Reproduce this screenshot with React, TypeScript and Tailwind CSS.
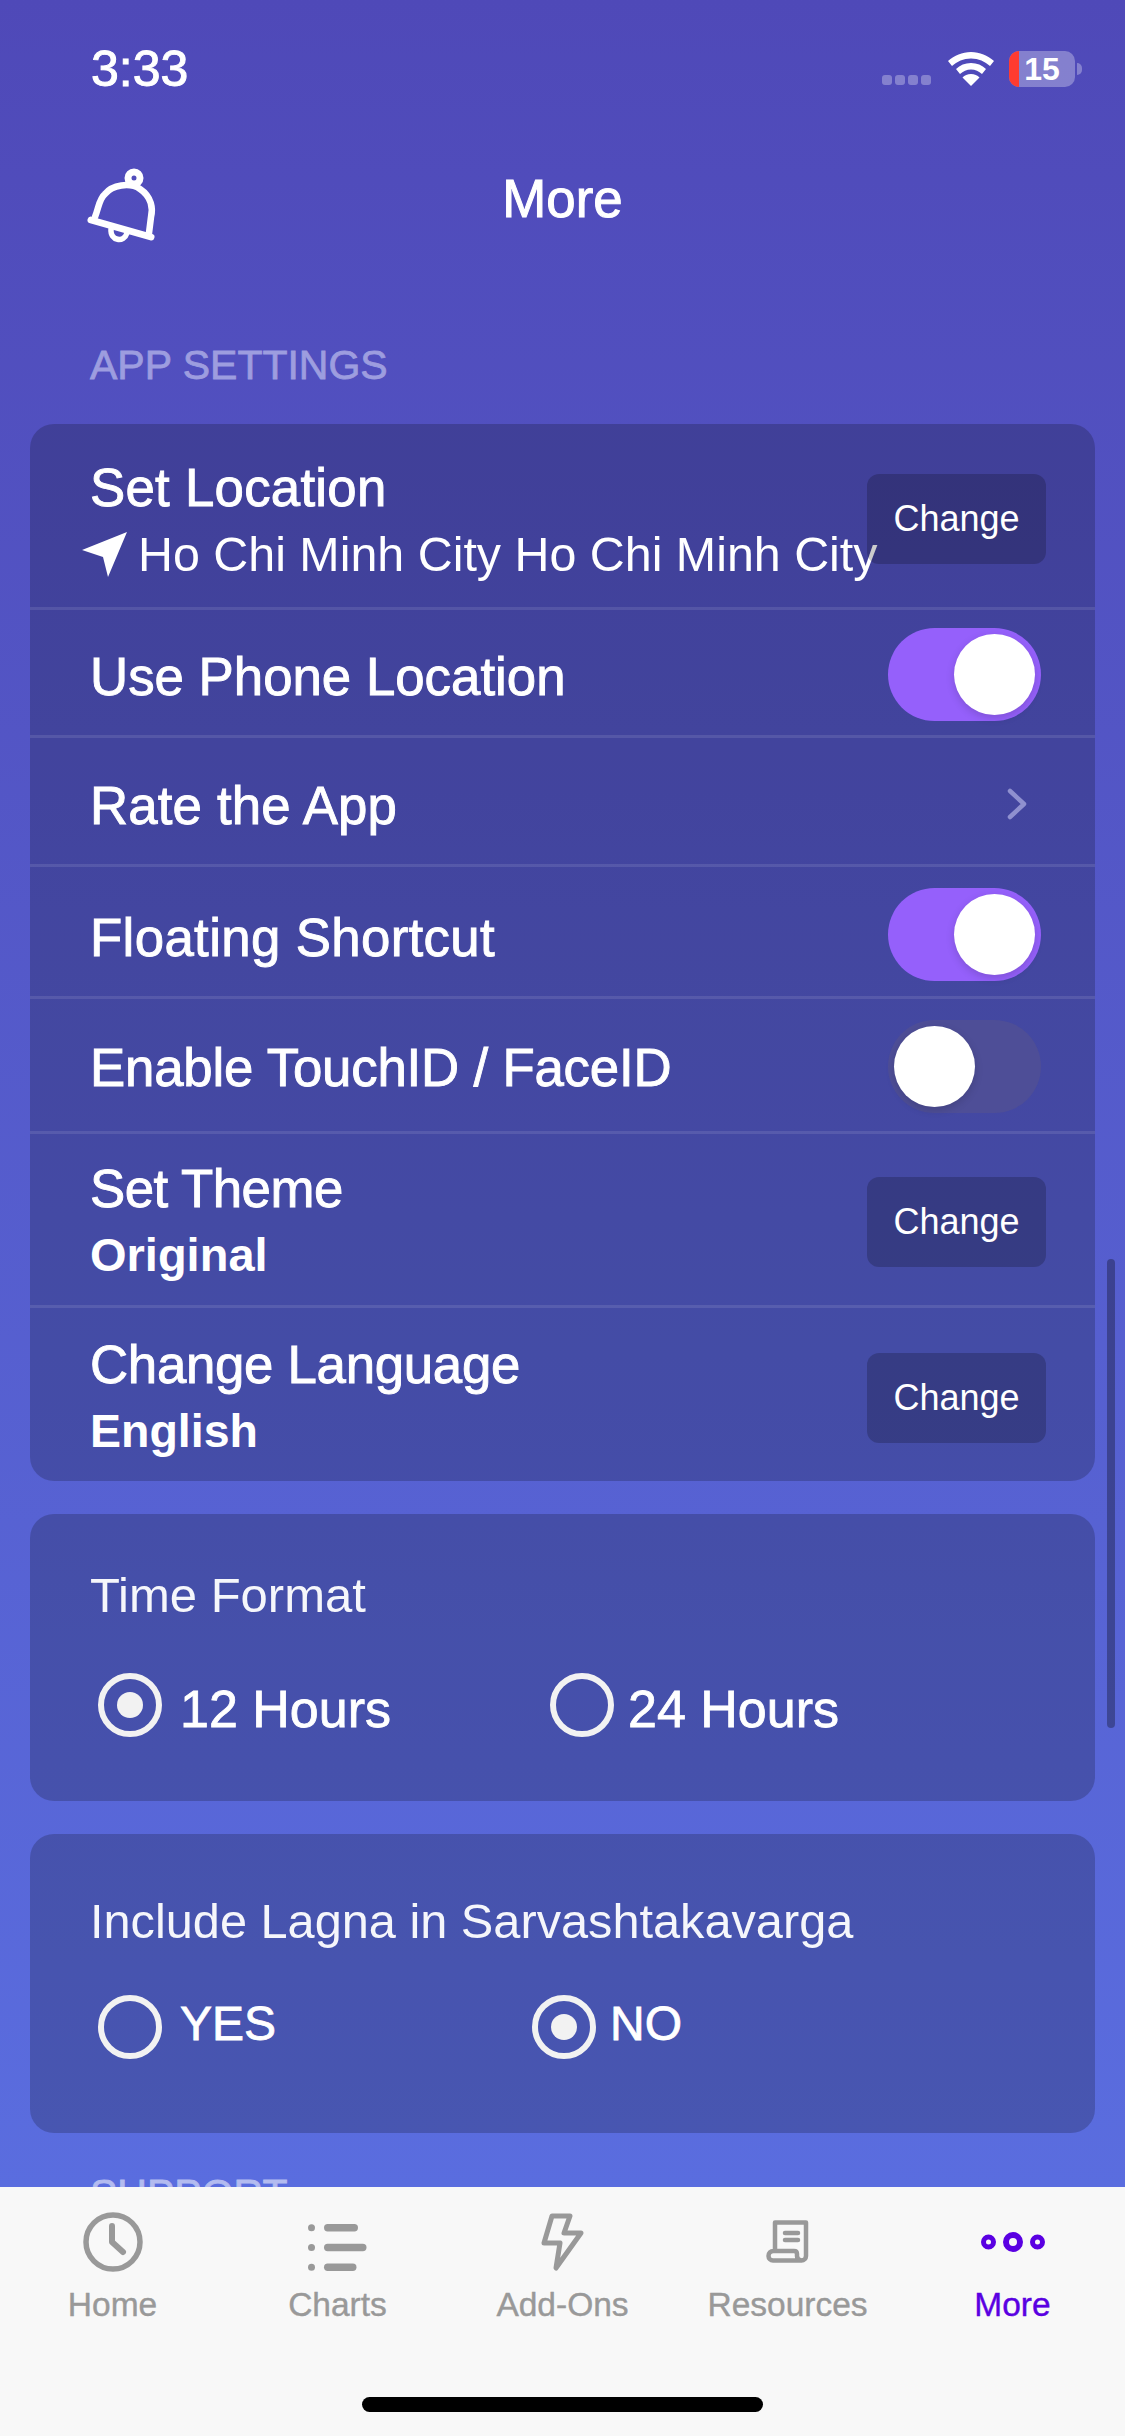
import React from "react";

function Toggle({ on }: { on: boolean }) {
  return (
    <div className={on ? "flex h-[93px] w-[153px] items-center justify-end rounded-full bg-[#9560fb] pr-[6px]" : "flex h-[93px] w-[153px] items-center justify-start rounded-full bg-[#4e4e97] pl-[6px]"}>
      <div className="h-[81px] w-[81px] rounded-full bg-white shadow-[0_3px_8px_rgba(0,0,0,0.15)]" />
    </div>
  );
}

function ChangeBtn() {
  return (
    <div className="flex h-[90px] w-[179px] shrink-0 items-center justify-center rounded-[12px] bg-[#000000]/20 text-[36px] font-normal text-white [-webkit-text-stroke:0px_#fff]">
      Change
    </div>
  );
}

function Row({ h, children, last }: { h: string; children: React.ReactNode; last?: boolean }) {
  return (
    <div className={`flex ${h} items-center justify-between pl-[60px] ${last ? "" : "border-b-[3px] border-white/10"}`}>
      {children}
    </div>
  );
}

function Radio({ on }: { on: boolean }) {
  return (
    <div className="flex h-[64px] w-[64px] shrink-0 items-center justify-center rounded-full border-[6px] border-[#f2f2f2]">
      {on && <div className="h-[26px] w-[26px] rounded-full bg-[#f2f2f2]" />}
    </div>
  );
}

const tabs = [
  {
    label: "Home",
    icon: (
      <svg width="60" height="60" viewBox="0 0 60 60" fill="none" stroke="#999" strokeLinecap="round" strokeLinejoin="round">
        <circle cx="30" cy="30" r="27" strokeWidth="5.5" />
        <path d="M29 14v16l11 10" strokeWidth="6" />
      </svg>
    ),
  },
  {
    label: "Charts",
    icon: (
      <svg className="mt-[10px]" width="59" height="47" viewBox="0 0 59 47" fill="#999">
        <circle cx="3.500" cy="3.700" r="3.500" />
        <circle cx="3.500" cy="23.500" r="3.500" />
        <circle cx="3.500" cy="43.300" r="3.500" />
        <rect x="16" y="0" width="34" height="7.500" rx="3.700" />
        <rect x="16" y="19.700" width="42.500" height="7.500" rx="3.700" />
        <rect x="16" y="39.500" width="32.500" height="7.500" rx="3.700" />
      </svg>
    ),
  },
  {
    label: "Add-Ons",
    icon: (
      <svg width="44" height="60" viewBox="0 0 44 60" fill="none" stroke="#999" strokeWidth="5" strokeLinejoin="round">
        <path d="M11 4H29L23 21H40L15 56L19 31H3Z" />
      </svg>
    ),
  },
  {
    label: "Resources",
    icon: (
      <svg width="44" height="44" viewBox="0 0 44 44" fill="none" stroke="#999" strokeWidth="4.500" strokeLinejoin="round" strokeLinecap="round">
        <path d="M9 31V2.500H40V36a4.500 4.500 0 0 1-4.500 4.500H7a4.500 4.500 0 0 1-4.500-4.500c0-3 2-5 5-5H28c2 0 3 1 3 3v2c0 2 1.500 4 4.500 4.500" />
        <path d="M19 13h13M19 20h13" />
      </svg>
    ),
  },
  {
    label: "More",
    icon: (
      <svg width="64" height="22" viewBox="0 0 64 22" fill="none" stroke="#5a00e2">
        <circle cx="7.500" cy="11" r="5" strokeWidth="5" />
        <circle cx="32" cy="11" r="7" strokeWidth="6" />
        <circle cx="56.500" cy="11" r="5" strokeWidth="5" />
      </svg>
    ),
  },
];

export default function App() {
  return (
    <div className="relative flex h-[2436px] w-[1125px] flex-col overflow-hidden font-['Liberation_Sans',Arial,sans-serif] text-white">
      <div className="relative flex min-h-0 flex-1 flex-col overflow-hidden bg-gradient-to-b from-[#4f49b8] to-[#5a6ddf]">
        {/* status bar */}
        <div className="flex h-[137px] shrink-0 items-start justify-between pt-[44px] pl-[91px] pr-[43px]">
          <span className="text-[50px] leading-[50px] [-webkit-text-stroke:1px_#fff]">3:33</span>
          <div className="flex items-center pt-[7px]">
            <div className="mt-[22px] mr-[17px] flex gap-[3px]">
              {[0, 1, 2, 3].map((i) => (
                <div key={i} className="h-[10px] w-[10px] rounded-[3px] bg-white/30" />
              ))}
            </div>
            <svg width="46" height="34" viewBox="0 0 46 34" fill="#fff" className="mr-[15px]">
              <path d="M23 0C14 0 6.500 3.500 0 9l4 5c5-4.500 11.500-7.500 19-7.500S37 9.500 42 14l4-5C39.500 3.500 32 0 23 0z" />
              <path d="M23 11c-6 0-11 2.300-15 6l4 5c3-2.700 6.800-4.500 11-4.500s8 1.800 11 4.500l4-5c-4-3.700-9-6-15-6z" />
              <path d="M23 22c-3.500 0-6.500 1.300-8.500 3.500L23 34l8.500-8.500C29.500 23.300 26.500 22 23 22z" />
            </svg>
            <div className="relative flex h-[36px] w-[66px] items-center justify-center overflow-hidden rounded-[10px] bg-white/30 text-[32px] leading-none font-bold">
              <div className="absolute inset-y-0 left-0 w-[10px] bg-[#ff3b30]" />
              <span className="relative">15</span>
            </div>
            <div className="ml-[2px] h-[12px] w-[5px] rounded-r-full bg-white/30" />
          </div>
        </div>

        {/* nav */}
        <div className="grid h-[122px] shrink-0 grid-cols-[1fr_auto_1fr] items-center">
          <svg className="mt-[4px] ml-[60px]" width="120" height="120" viewBox="0 0 120 120" fill="none" stroke="#fff" strokeWidth="6.500" strokeLinecap="round" strokeLinejoin="round">
            <path d="M35 76C39 66 39 58 45 53C52 44 70 41 80 48C92 56 93 68 91 76L89 92" />
            <path d="M31 79L91 96" strokeWidth="7" />
            <circle cx="74" cy="37" r="6" strokeWidth="7" />
            <path d="M51 88C50 100 64 102 67 92" strokeWidth="5.500" />
          </svg>
          <span className="text-[52.8px] [-webkit-text-stroke:1px_#fff]">More</span>
          <span />
        </div>

        {/* section label */}
        <div className="shrink-0 pt-[83px] pl-[90px]">
          <div className="text-[41px] leading-[46px] text-[#9d9ddf] [-webkit-text-stroke:0.8px_#9d9ddf]">APP SETTINGS</div>
        </div>

        <div className="mx-[30px] mt-[36px] flex shrink-0 flex-col gap-[33px]">
          {/* settings card */}
          <div className="overflow-hidden rounded-[24px] bg-[#000000]/20 text-[52.8px] [-webkit-text-stroke:0.9px_#fff]">
            <Row h="h-[186px]">
              <div className="w-0 flex-1 whitespace-nowrap pt-[10px]">
                <div className="leading-[60px] tracking-[0.25px]">Set Location</div>
                <div className="mt-[6px] flex items-center text-[48.4px] leading-[60px] [-webkit-text-stroke:0px_#fff]">
                  <svg className="-ml-[8px] mr-[10px] shrink-0" width="46" height="46" viewBox="0 0 46 46" fill="#fff">
                    <path d="M45 1L0 19l21 7 5 20z" />
                  </svg>
                  Ho Chi Minh City Ho Chi Minh City
                </div>
              </div>
              <div className="relative mr-[49px] mt-[7px]"><ChangeBtn /></div>
            </Row>
            <Row h="h-[128px]">
              <span className="pt-[9px]">Use Phone Location</span>
              <div className="mr-[54px] mt-[3px]"><Toggle on /></div>
            </Row>
            <Row h="h-[129px]">
              <span className="pt-[9px] tracking-[0.15px]">Rate the App</span>
              <svg className="mr-[68px] mt-[6px]" width="20" height="32" viewBox="0 0 20 32" fill="none" stroke="#8f90cf" strokeWidth="4.500" strokeLinecap="round" strokeLinejoin="round">
                <path d="M3 3l14 13L3 29" />
              </svg>
            </Row>
            <Row h="h-[132px]">
              <span className="pt-[12px] tracking-[0.35px]">Floating Shortcut</span>
              <div className="mr-[54px] mt-[5px]"><Toggle on /></div>
            </Row>
            <Row h="h-[135px]">
              <span className="pt-[6px] tracking-[-0.2px]">Enable TouchID / FaceID</span>
              <div className="mr-[54px] mt-[3px]"><Toggle on={false} /></div>
            </Row>
            <Row h="h-[174px]">
              <div className="pt-[4px]">
                <div className="leading-[60px] tracking-[-0.5px]">Set Theme</div>
                <div className="mt-[6px] text-[47px] leading-[60px] font-bold [-webkit-text-stroke:0px_#fff]">Original</div>
              </div>
              <div className="mr-[49px] mt-[4px]"><ChangeBtn /></div>
            </Row>
            <Row h="h-[173px]" last>
              <div className="pt-[6px]">
                <div className="leading-[60px] tracking-[-0.3px]">Change Language</div>
                <div className="mt-[6px] text-[46.5px] leading-[60px] font-bold [-webkit-text-stroke:0px_#fff]">English</div>
              </div>
              <div className="mr-[49px] mt-[6px]"><ChangeBtn /></div>
            </Row>
          </div>

          {/* time format */}
          <div className="h-[287px] rounded-[24px] bg-[#000000]/20 pt-[51px] pl-[60px]">
            <div className="text-[49px] leading-[60px] text-white/95">Time Format</div>
            <div className="mt-[48px] flex items-center text-[52px] leading-none [-webkit-text-stroke:0.8px_#fff]">
              <div className="ml-[8px]"><Radio on /></div>
              <span className="ml-[18px] w-[370px] pt-[8px]">12 Hours</span>
              <Radio on={false} />
              <span className="ml-[14px] pt-[8px]">24 Hours</span>
            </div>
          </div>

          {/* lagna */}
          <div className="h-[299px] rounded-[24px] bg-[#000000]/20 pt-[57px] pl-[60px]">
            <div className="text-[48.7px] leading-[60px] text-white/95">Include Lagna in Sarvashtakavarga</div>
            <div className="mt-[44px] flex items-center text-[48px] leading-none [-webkit-text-stroke:0.8px_#fff]">
              <div className="ml-[8px]"><Radio on={false} /></div>
              <span className="ml-[18px] w-[352px] pb-[6px]">YES</span>
              <Radio on />
              <span className="ml-[14px] pb-[6px]">NO</span>
            </div>
          </div>
        </div>

        <div className="mt-[38px] shrink-0 pl-[90px] text-[41px] leading-[46px] text-[#b3bbf0] [-webkit-text-stroke:0.8px_#b3bbf0]">SUPPORT</div>

        {/* scroll indicator */}
        <div className="absolute top-[1259px] right-[10px] h-[469px] w-[8px] rounded-full bg-[#000000]/30" />
      </div>

      {/* tab bar */}
      <div className="flex h-[249px] shrink-0 flex-col bg-[#f8f8f8]">
        <div className="flex">
          {tabs.map((t) => (
            <div key={t.label} className="flex w-[225px] flex-col items-center">
              <div className="flex h-[98px] w-full items-center justify-center pt-[12px]">{t.icon}</div>
              <span className={t.label === "More" ? "text-[33.5px] leading-[40px] text-[#5a00e2] [-webkit-text-stroke:0.4px_#5a00e2]" : "text-[33.5px] leading-[40px] text-[#999999] [-webkit-text-stroke:0.4px_#999999]"}>
                {t.label}
              </span>
            </div>
          ))}
        </div>
        <div className="mt-[72px] h-[15px] w-[401px] self-center rounded-full bg-black" />
      </div>
    </div>
  );
}
